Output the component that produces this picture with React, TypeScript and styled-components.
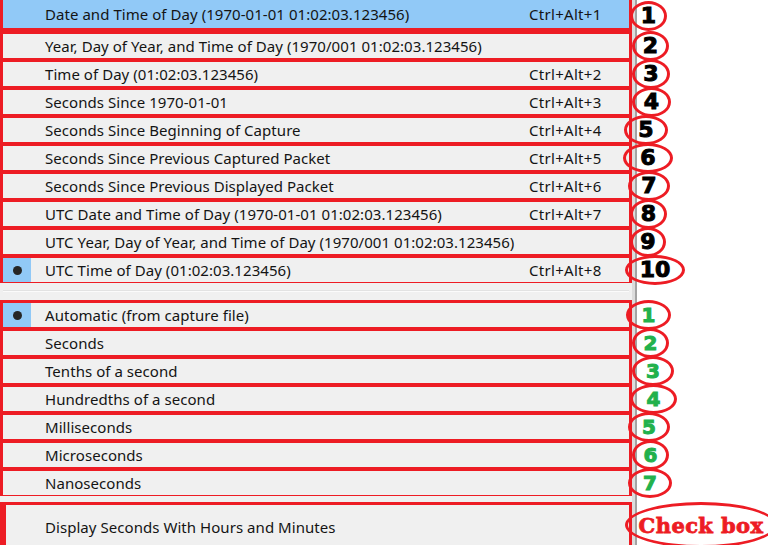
import * as React from "react";
import styled, { createGlobalStyle } from "styled-components";

const RED = "#ed1c24";
const GREEN = "#22b14c";

const GlobalStyle = createGlobalStyle`
  html, body {
    margin: 0;
    padding: 0;
    background: #ffffff;
  }
  body {
    font-family: "Noto Sans", "Open Sans", sans-serif;
  }
`;

const Page = styled.div`
  width: 768px;
  height: 545px;
  overflow: hidden;
  display: flex;
  flex-direction: column;
  background: #ffffff;
`;

const Line = styled.div<{ $h: number }>`
  display: grid;
  grid-template-columns: 632px 5px 1fr;
  height: ${(p) => p.$h}px;
  flex-shrink: 0;
`;

const Item = styled.div<{ $active?: boolean; $tall?: boolean; $first?: boolean }>`
  box-sizing: border-box;
  border: 3px solid ${RED};
  border-top-width: ${(p) => (p.$first ? 0 : 3)}px;
  border-left-width: ${(p) => (p.$tall ? 6 : 3)}px;
  background: ${(p) => (p.$active ? "#91c9f7" : "#f0f0f0")};
  display: grid;
  grid-template-columns: ${(p) => (p.$tall ? 25 : 28)}px 1fr 100px;
  align-items: ${(p) => (p.$tall ? "end" : "stretch")};
  padding-bottom: ${(p) => (p.$tall ? 8 : 0)}px;
  font-size: 15px;
  color: #141414;
  white-space: nowrap;
`;

const Gutter = styled.div<{ $checked?: boolean }>`
  background: ${(p) => (p.$checked ? "#91c9f7" : "transparent")};
  display: flex;
  align-items: center;
  justify-content: center;
`;

const Dot = styled.span`
  width: 9px;
  height: 9px;
  border-radius: 50%;
  background: #262626;
`;

const Label = styled.div`
  display: flex;
  align-items: center;
  padding-left: 14px;
  letter-spacing: 0.05px;
`;

const Shortcut = styled.div`
  display: flex;
  align-items: center;
  letter-spacing: 0.3px;
`;

const Separator = styled.div`
  background: #f0f0f0;
  display: flex;
  align-items: center;
  padding: 0 3px;
  &::after {
    content: "";
    flex: 1;
    height: 1px;
    background: #fbfbfb;
    box-shadow: 0 -1px 0 #e2e2e2;
  }
`;

const Blank = styled.div`
  background: #f0f0f0;
`;

const Divider = styled.div`
  background: #dcdcdc;
  border-right: 2px solid #a3a3a3;
`;

const Note = styled.div`
  display: flex;
  align-items: center;
  position: relative;
  z-index: 1;
`;

const Ring = styled.div<{ $x: number; $w: number; $h?: number; $green?: boolean }>`
  box-sizing: border-box;
  flex-shrink: 0;
  margin-left: ${(p) => p.$x}px;
  width: ${(p) => p.$w}px;
  height: ${(p) => p.$h ?? 30}px;
  border: 3px solid ${RED};
  border-radius: 50%;
  display: flex;
  align-items: center;
  justify-content: center;
  font-family: "DejaVu Sans", sans-serif;
  font-weight: 700;
  font-size: ${(p) => (p.$green ? 20 : 22)}px;
  color: ${(p) => (p.$green ? GREEN : "#000")};
  -webkit-text-stroke: 1px ${(p) => (p.$green ? GREEN : "#000")};
  line-height: 1;
`;

const CheckLabel = styled.span`
  font-family: "DejaVu Serif", serif;
  font-weight: 700;
  font-size: 21px;
  color: ${RED};
  -webkit-text-stroke: 0.8px ${RED};
  letter-spacing: 0.4px;
  white-space: nowrap;
`;

type Row = {
  label: string;
  shortcut?: string;
  active?: boolean;
  checked?: boolean;
  num: string;
  x: number;
  w: number;
};

const formats: Row[] = [
  { label: "Date and Time of Day (1970-01-01 01:02:03.123456)", shortcut: "Ctrl+Alt+1", active: true, num: "1", x: -7, w: 37 },
  { label: "Year, Day of Year, and Time of Day (1970/001 01:02:03.123456)", num: "2", x: -5, w: 37 },
  { label: "Time of Day (01:02:03.123456)", shortcut: "Ctrl+Alt+2", num: "3", x: -5, w: 38 },
  { label: "Seconds Since 1970-01-01", shortcut: "Ctrl+Alt+3", num: "4", x: -5, w: 39 },
  { label: "Seconds Since Beginning of Capture", shortcut: "Ctrl+Alt+4", num: "5", x: -13, w: 44 },
  { label: "Seconds Since Previous Captured Packet", shortcut: "Ctrl+Alt+5", num: "6", x: -14, w: 50 },
  { label: "Seconds Since Previous Displayed Packet", shortcut: "Ctrl+Alt+6", num: "7", x: -9, w: 42 },
  { label: "UTC Date and Time of Day (1970-01-01 01:02:03.123456)", shortcut: "Ctrl+Alt+7", num: "8", x: -7, w: 37 },
  { label: "UTC Year, Day of Year, and Time of Day (1970/001 01:02:03.123456)", num: "9", x: -7, w: 36 },
  { label: "UTC Time of Day (01:02:03.123456)", shortcut: "Ctrl+Alt+8", checked: true, num: "10", x: -12, w: 60 },
];

const precisions: Row[] = [
  { label: "Automatic (from capture file)", checked: true, num: "1", x: -11, w: 45 },
  { label: "Seconds", num: "2", x: -5, w: 37 },
  { label: "Tenths of a second", num: "3", x: -5, w: 42 },
  { label: "Hundredths of a second", num: "4", x: -7, w: 47 },
  { label: "Milliseconds", num: "5", x: -9, w: 42 },
  { label: "Microseconds", num: "6", x: -5, w: 37 },
  { label: "Nanoseconds", num: "7", x: -9, w: 44 },
];

const MenuRow = ({ row, h, green, first }: { row: Row; h: number; green?: boolean; first?: boolean }) => (
  <Line $h={h}>
    <Item $active={row.active} $first={first}>
      <Gutter $checked={row.checked}>{row.checked && <Dot />}</Gutter>
      <Label>{row.label}</Label>
      <Shortcut>{row.shortcut}</Shortcut>
    </Item>
    <Divider />
    <Note>
      <Ring $x={row.x} $w={row.w} $green={green}>
        {row.num}
      </Ring>
    </Note>
  </Line>
);

const Gap = ({ h, line }: { h: number; line?: boolean }) => (
  <Line $h={h}>
    {line ? <Separator /> : <Blank />}
    <Divider />
    <div />
  </Line>
);

export default function App() {
  return (
    <>
      <GlobalStyle />
      <Page>
        {formats.map((row, i) => (
          <MenuRow key={row.label} row={row} h={i === 0 ? 31 : 28} first={i === 0} />
        ))}
        <Gap h={17} line />
        {precisions.map((row) => (
          <MenuRow key={row.label} row={row} h={28} green />
        ))}
        <Gap h={6} />
        <Line $h={43}>
          <Item $tall>
            <Gutter />
            <Label>Display Seconds With Hours and Minutes</Label>
            <Shortcut />
          </Item>
          <Divider />
          <Note>
            <Ring $x={-12} $w={152} $h={46}>
              <CheckLabel>Check box</CheckLabel>
            </Ring>
          </Note>
        </Line>
      </Page>
    </>
  );
}
